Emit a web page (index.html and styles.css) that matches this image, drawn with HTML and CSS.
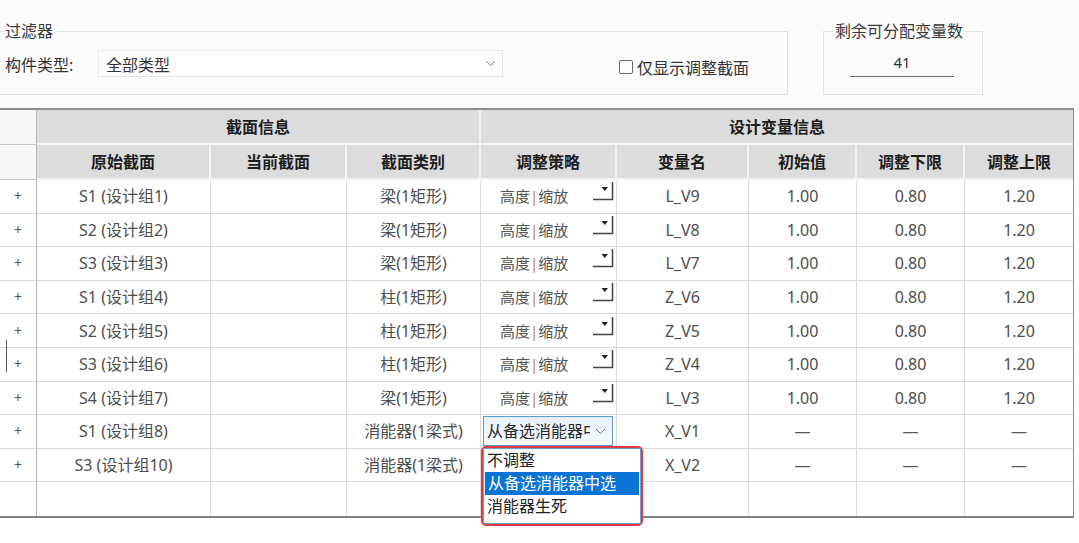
FILE: index.html
```html
<!DOCTYPE html>
<html lang="zh-CN">

<head>
    <meta charset="UTF-8">
    <title>截面设计变量</title>
    <link rel="stylesheet" href="styles.css">
</head>

<body>
    <div class="filters">
        <fieldset class="group filter-group">
            <legend>过滤器</legend>
            <div class="filter-row">
                <span class="label">构件类型:</span>
                <div class="combo">
                    <span>全部类型</span>
                    <svg width="11" height="7" viewBox="0 0 11 7"><path d="M1 1 L5.5 5.5 L10 1" fill="none" stroke="#8a8a8a" stroke-width="1"/></svg>
                </div>
                <label class="check"><span class="box"></span>仅显示调整截面</label>
            </div>
        </fieldset>
        <fieldset class="group count-group">
            <legend>剩余可分配变量数</legend>
            <div class="count">41</div>
        </fieldset>
    </div>

    <div class="grid-wrap">
        <table class="grid">
            <colgroup>
                <col class="c0"><col class="c1"><col class="c2"><col class="c3"><col class="c4">
                <col class="c5"><col class="c6"><col class="c7"><col class="c8">
            </colgroup>
            <thead>
                <tr class="h1">
                    <th class="corner"></th>
                    <th colspan="3">截面信息</th>
                    <th colspan="5" class="last">设计变量信息</th>
                </tr>
                <tr class="h2">
                    <th class="corner"></th>
                    <th>原始截面</th>
                    <th>当前截面</th>
                    <th>截面类别</th>
                    <th>调整策略</th>
                    <th>变量名</th>
                    <th>初始值</th>
                    <th>调整下限</th>
                    <th class="last">调整上限</th>
                </tr>
            </thead>
            <tbody id="rows"></tbody>
        </table>

        <span class="caret"></span>

        <div class="dropdown">
            <ul>
                <li>不调整</li>
                <li class="sel">从备选消能器中选</li>
                <li>消能器生死</li>
            </ul>
        </div>
    </div>

    <script>
        const rows = [
            { name: "S1 (设计组1)", type: "梁(1矩形)", v: "L_V9", init: "1.00", lo: "0.80", hi: "1.20" },
            { name: "S2 (设计组2)", type: "梁(1矩形)", v: "L_V8", init: "1.00", lo: "0.80", hi: "1.20" },
            { name: "S3 (设计组3)", type: "梁(1矩形)", v: "L_V7", init: "1.00", lo: "0.80", hi: "1.20" },
            { name: "S1 (设计组4)", type: "柱(1矩形)", v: "Z_V6", init: "1.00", lo: "0.80", hi: "1.20" },
            { name: "S2 (设计组5)", type: "柱(1矩形)", v: "Z_V5", init: "1.00", lo: "0.80", hi: "1.20" },
            { name: "S3 (设计组6)", type: "柱(1矩形)", v: "Z_V4", init: "1.00", lo: "0.80", hi: "1.20" },
            { name: "S4 (设计组7)", type: "梁(1矩形)", v: "L_V3", init: "1.00", lo: "0.80", hi: "1.20" },
            { name: "S1 (设计组8)", type: "消能器(1梁式)", v: "X_V1", init: "—", lo: "—", hi: "—", open: true },
            { name: "S3 (设计组10)", type: "消能器(1梁式)", v: "X_V2", init: "—", lo: "—", hi: "—", hidden: true }
        ];

        const arrow = '<svg class="ddbtn" width="22" height="20" viewBox="0 0 22 20">' +
            '<path d="M9.5 6 H16 L12.75 10 Z" fill="#222"/>' +
            '<path d="M1 18.5 H20.5 V1" fill="none" stroke="#444" stroke-width="1.5"/></svg>';
        const chevron = '<svg width="11" height="7" viewBox="0 0 11 7"><path d="M1 1 L5.5 5.5 L10 1" fill="none" stroke="#7a7a7a" stroke-width="1"/></svg>';

        const body = document.getElementById("rows");
        rows.forEach(r => {
            let strat = '<div class="cb"><span>高度<i>|</i>缩放</span>' + arrow + '</div>';
            if (r.open) strat = '<div class="cb-open"><span>从备选消能器中选</span>' + chevron + '</div>';
            if (r.hidden) strat = '';
            const dash = r.init == "—" ? ' class="dash"' : '';
            body.innerHTML += '<tr><td class="rh">+</td><td>' + r.name + '</td><td></td><td>' + r.type +
                '</td><td class="strat">' + strat + '</td><td>' + r.v + '</td><td' + dash + '>' + r.init +
                '</td><td' + dash + '>' + r.lo + '</td><td' + dash + ' >' + r.hi + '</td></tr>';
        });
        body.innerHTML += '<tr><td class="rh"></td><td></td><td></td><td></td><td class="strat"></td><td></td><td></td><td></td><td></td></tr>';
    </script>
</body>

</html>
```

FILE: styles.css
```css
* {
    box-sizing: border-box;
}

body {
    margin: 0;
    background: #fbfbfb;
    font-family: "Noto Sans", "Noto Sans CJK SC", sans-serif;
    font-size: 16px;
    color: #333;
}

.filters {
    display: flex;
    align-items: flex-start;
    height: 108px;
}

.group {
    margin: 21px 0 0;
    border: 1px solid #e2e2e2;
    min-width: 0;
}

.group legend {
    padding: 0 4px 0 0;
    height: 20px;
    line-height: 20px;
    color: #3a3a3a;
}

.filter-group {
    width: 788px;
    border-left: none;
    padding: 9px 0 17px 5px;
}

.filter-row {
    display: flex;
    align-items: center;
    height: 27px;
}

.label {
    width: 93px;
    color: #333;
}

.combo {
    width: 405px;
    height: 27px;
    background: #fff;
    border: 1px solid #e6e6e6;
    display: flex;
    align-items: center;
    justify-content: space-between;
    padding: 0 6px 0 7px;
    color: #333;
}

.check {
    margin-left: 116px;
    margin-top: 6px;
    display: flex;
    align-items: center;
    gap: 4px;
    color: #333;
}

.box {
    width: 14px;
    height: 14px;
    border: 1.5px solid #666;
    border-radius: 2px;
    background: #fff;
}

.count-group {
    margin-left: 35px;
    width: 160px;
    padding: 9px 0 17px 9px;
}

.count-group legend {
    padding: 0 2px;
}

.count {
    width: 104px;
    height: 27px;
    margin-left: 17px;
    text-align: center;
    line-height: 24px;
    font-size: 15px;
    border-bottom: 1px solid #6b6b6b;
    color: #333;
}

.grid-wrap {
    position: relative;
    background: #fff;
    padding-bottom: 30px;
}

.grid {
    table-layout: fixed;
    border-collapse: separate;
    border-spacing: 0;
    width: 1074px;
    background: #fff;
    border-top: 2px solid #8c8c8c;
    border-bottom: 2px solid #808080;
    border-right: 1px solid #8a8a8a;
}

.c0 { width: 37px; }
.c1 { width: 174px; }
.c2 { width: 136px; }
.c3 { width: 134px; }
.c4 { width: 136px; }
.c5 { width: 132px; }
.c6 { width: 108px; }
.c7 { width: 108px; }
.c8 { width: 108px; }

.h1, .h2 {
    height: 35px;
}

.grid th {
    background: #dcdcdc;
    color: #1e1e1e;
    font-weight: bold;
    font-size: 16px;
    line-height: 20px;
    padding: 0;
    border-right: 2px solid #f3f3f3;
    border-bottom: 2px solid #f3f3f3;
}

.grid th.last {
    border-right: none;
}

.grid th.corner {
    background: #f6f6f6;
    border-right: 1px solid #b8b8b8;
    border-bottom: 1px solid #c8c8c8;
}

.grid tbody tr {
    height: 33.6px;
}

.grid td {
    padding: 0;
    text-align: center;
    color: #4e4e4e;
    line-height: 20px;
    white-space: nowrap;
    overflow: hidden;
    border-right: 1px solid #dadada;
    border-bottom: 1px solid #dadada;
}

.grid td:last-child {
    border-right: none;
}

.grid tbody tr:last-child td {
    border-bottom: none;
}

.grid td.rh {
    font-size: 14px;
    color: #555;
    border-right-color: #b8b8b8;
}

.grid td.dash {
    color: #555;
}

.grid td.strat {
    text-align: left;
}

.cb {
    display: flex;
    align-items: center;
    justify-content: space-between;
    padding-left: 19px;
    padding-right: 2px;
    color: #555;
    font-size: 15px;
}

.cb i {
    font-style: normal;
    color: #b27a98;
}

.ddbtn {
    margin-bottom: 10px;
}

.cb-open {
    display: flex;
    align-items: center;
    height: 30px;
    margin: 0 3px 0 2px;
    padding: 0 6px 0 3px;
    border: 1px solid #5b9bd5;
    background: linear-gradient(#e6f0fb, #f7fbff);
    color: #2a2a2a;
}

.cb-open span {
    width: 103px;
    overflow: hidden;
}

.cb-open svg {
    margin-left: auto;
}

.caret {
    position: absolute;
    left: 6px;
    top: 232px;
    height: 32px;
    border-left: 1.5px solid #555;
}

.dropdown {
    position: absolute;
    left: 481px;
    top: 338px;
    width: 162px;
    height: 80px;
    border: 2px solid #e23a3f;
    border-radius: 5px;
    background: #fff;
}

.dropdown ul {
    margin: 0;
    padding: 0;
    list-style: none;
    height: 100%;
    border: 1px solid #6c9fd4;
}

.dropdown li {
    height: 23px;
    line-height: 23px;
    padding-left: 3px;
    color: #222;
}

.dropdown li.sel {
    background: #0a74d6;
    color: #fff;
    margin: 0 1px;
}
```
